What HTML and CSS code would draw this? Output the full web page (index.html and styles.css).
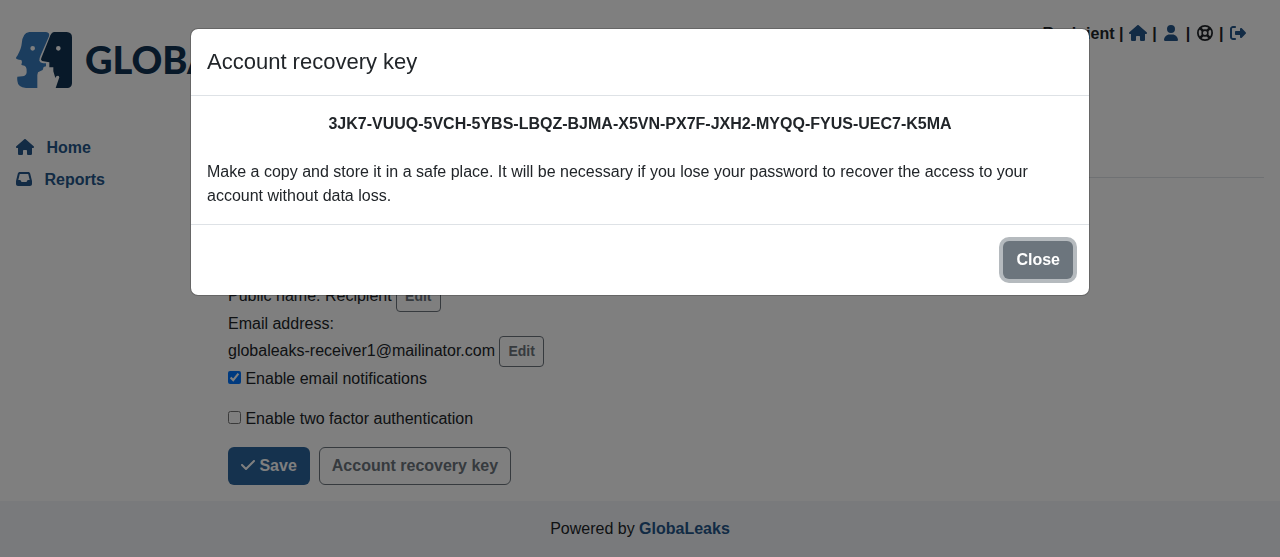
FILE: index.html
```html
<!DOCTYPE html>
<html lang="en">
<head>
<meta charset="utf-8">
<meta name="viewport" content="width=device-width, initial-scale=1">
<title>GlobaLeaks</title>
<link rel="stylesheet" href="styles.css">
</head>
<body>
<svg class="defs" aria-hidden="true">
  <symbol id="house" viewBox="0 0 576 512"><path d="M575.800 255.500c0 18-15 32.100-32 32.100l-32 0 .7 160.200c0 2.700-.2 5.400-.5 8.100l0 16.200c0 22.100-17.900 40-40 40l-16 0c-1.100 0-2.200 0-3.300-.1c-1.400 .1-2.800 .1-4.200 .1L416 512l-24 0c-22.100 0-40-17.900-40-40l0-24 0-64c0-17.700-14.300-32-32-32l-64 0c-17.700 0-32 14.300-32 32l0 64 0 24c0 22.100-17.900 40-40 40l-24 0-31.900 0c-1.500 0-3-.1-4.500-.2c-1.200 .1-2.400 .2-3.600 .2l-16 0c-22.100 0-40-17.900-40-40l0-112c0-.9 0-1.900 .1-2.800l0-69.700-32 0c-18 0-32-14-32-32.100c0-9 3-17 10-24L266.400 8c7-7 15-8 22-8s15 2 21 7L564.800 231.500c8 7 12 15 11 24z"/></symbol>
  <symbol id="user" viewBox="0 0 448 512"><path d="M224 256A128 128 0 1 0 224 0a128 128 0 1 0 0 256zm-45.700 48C79.800 304 0 383.800 0 482.300C0 498.700 13.300 512 29.700 512l388.600 0c16.400 0 29.700-13.300 29.700-29.700C448 383.800 368.200 304 269.700 304l-91.400 0z"/></symbol>
  <symbol id="ring" viewBox="0 0 512 512"><g fill="none" stroke="currentColor"><circle cx="256" cy="256" r="228" stroke-width="56"/><circle cx="256" cy="256" r="92" stroke-width="50"/><path stroke-width="82" d="M92 92l98 98M420 92l-98 98M92 420l98-98M420 420l-98-98"/></g></symbol>
  <symbol id="signout" viewBox="0 0 512 512"><path d="M377.900 105.900L500.700 228.700c7.200 7.200 11.300 17.100 11.300 27.300s-4.100 20.100-11.300 27.300L377.900 406.100c-6.400 6.400-15 9.900-24 9.900c-18.700 0-33.900-15.200-33.900-33.900l0-62.100-128 0c-17.700 0-32-14.300-32-32l0-64c0-17.700 14.300-32 32-32l128 0 0-62.100c0-18.700 15.200-33.900 33.900-33.900c9 0 17.600 3.600 24 9.900zM160 96L96 96c-17.700 0-32 14.300-32 32l0 256c0 17.700 14.300 32 32 32l64 0c17.700 0 32 14.300 32 32s-14.300 32-32 32l-64 0c-53 0-96-43-96-96L0 128C0 75 43 32 96 32l64 0c17.700 0 32 14.300 32 32s-14.300 32-32 32z"/></symbol>
  <symbol id="inbox" viewBox="0 0 512 512"><path d="M121 32C91.600 32 66 52 58.900 80.500L1.900 308.400C.6 313.500 0 318.700 0 323.900L0 416c0 35.300 28.700 64 64 64l384 0c35.300 0 64-28.700 64-64l0-92.100c0-5.200-.6-10.400-1.900-15.500l-57-227.900C446 52 420.400 32 391 32L121 32zm0 64l270 0 48 192-51.200 0c-12.100 0-23.200 6.800-28.600 17.700l-14.300 28.600c-5.400 10.800-16.500 17.700-28.600 17.700l-120.400 0c-12.100 0-23.200-6.800-28.600-17.700l-14.300-28.600c-5.400-10.800-16.500-17.700-28.600-17.700L73 288 121 96z"/></symbol>
  <symbol id="check" viewBox="0 0 448 512"><path d="M438.600 105.400c12.500 12.500 12.500 32.800 0 45.300l-256 256c-12.500 12.500-32.800 12.500-45.300 0l-128-128c-12.500-12.500-12.500-32.800 0-45.300s32.800-12.500 45.300 0L160 338.700 393.400 105.400c12.500-12.500 32.800-12.500 45.300 0z"/></symbol>
</svg>

<div class="page">
  <header class="header">
    <a class="logo" href="#" aria-label="GlobaLeaks">
      <svg class="logo-mark" viewBox="18 18 168 168" aria-hidden="true">
        <path class="face-light" d="M58 18H108Q120 19 117 31L92 88Q87 99 88 104Q90 111 100 112H108V121L101 123L98 132L84 139L82 147V186H48Q23 183 22 164Q21 157 22 152L37 151Q49 150 50 139Q52 118 37 118L34 116L36 108L34 102Q18 101 18 96Q18 93 22 89Q34 68 35 54Q37 20 58 18ZM68 60A7 7 0 1 0 68 74A7 7 0 1 0 68 60Z"/>
        <path class="face-dark" d="M132 18H170Q186 19 186 34V172Q185 185 174 186H137L148 154Q146 147 139 151L136 156L130 136V124H118V109L96 105Q91 101 94 96L118 36Q123 20 132 18ZM145 60A7 7 0 1 0 145 74A7 7 0 1 0 145 60Z"/>
      </svg>
      <span class="logo-text">GLOBALEAKS</span>
    </a>
    <nav class="userbar" aria-label="User">
      Recipient |
      <a href="#" aria-label="Home"><svg class="icon wide"><use href="#house"/></svg></a> |
      <a href="#" aria-label="Preferences"><svg class="icon"><use href="#user"/></svg></a> |
      <a class="plain" href="#" aria-label="Help"><svg class="icon"><use href="#ring"/></svg></a> |
      <a href="#" aria-label="Log out"><svg class="icon"><use href="#signout"/></svg></a>
    </nav>
  </header>

  <div class="columns">
    <nav class="sidebar" aria-label="Main">
      <a href="#"><svg class="icon wide"><use href="#house"/></svg> Home</a>
      <a href="#"><svg class="icon"><use href="#inbox"/></svg> Reports</a>
    </nav>
    <main class="content">
      <form class="prefs">
        <div>Public name: Recipient <button type="button" class="btn small outline">Edit</button></div>
        <div>Email address:</div>
        <div>globaleaks-receiver1@mailinator.com <button type="button" class="btn small outline">Edit</button></div>
        <label class="check"><input type="checkbox" checked> Enable email notifications</label>
        <label class="check spaced"><input type="checkbox"> Enable two factor authentication</label>
        <div class="actions">
          <button type="button" class="btn primary"><svg class="icon narrow"><use href="#check"/></svg> Save</button>
          <button type="button" class="btn outline">Account recovery key</button>
        </div>
      </form>
    </main>
  </div>

  <footer class="footer">Powered by <a href="#">GlobaLeaks</a></footer>
</div>

<div class="backdrop">
  <section class="modal" role="dialog" aria-modal="true" aria-labelledby="modal-title">
    <h1 class="modal-title" id="modal-title">Account recovery key</h1>
    <div class="modal-body">
      <p class="key">3JK7-VUUQ-5VCH-5YBS-LBQZ-BJMA-X5VN-PX7F-JXH2-MYQQ-FYUS-UEC7-K5MA</p>
      <p>Make a copy and store it in a safe place. It will be necessary if you lose your password to recover the access to your account without data loss.</p>
    </div>
    <div class="modal-footer"><button type="button" class="btn secondary">Close</button></div>
  </section>
</div>
</body>
</html>
```

FILE: styles.css
```css
* { box-sizing: border-box; }

body {
  margin: 0;
  background: #fff;
  color: #212529;
  font: 16px/24px "Liberation Sans", Arial, sans-serif;
}

p, h1 { margin: 0; }

a {
  color: #25568a;
  font-weight: 700;
  text-decoration: none;
}

.defs { display: none; }

.icon {
  width: 16px;
  height: 16px;
  fill: currentColor;
  vertical-align: -2px;
}
.icon.wide { width: 18px; }
.icon.narrow { width: 14px; }

.page {
  display: flex;
  flex-direction: column;
  min-height: 100vh;
}

.header {
  display: flex;
  justify-content: space-between;
  align-items: flex-start;
  padding: 22px 32px 0 16px;
}

.logo {
  display: flex;
  align-items: center;
  gap: 13px;
  margin-top: 10px;
}
.logo-mark { width: 56px; height: 56px; }
.face-light { fill: #377abc; fill-rule: evenodd; }
.face-dark { fill: #103253; fill-rule: evenodd; }
.logo-text {
  color: #103253;
  font: 900 38px/52px Lato, sans-serif;
  padding-bottom: 2px;
}

.userbar {
  color: #212529;
  font-weight: 700;
  white-space: nowrap;
}
.userbar a {
  display: inline-block;
  width: 20px;
  text-align: center;
}
.userbar .plain { color: #212529; }

.columns {
  display: flex;
  padding: 44px 16px 16px;
}

.sidebar { width: 196px; flex: none; }
.sidebar a {
  display: block;
  padding: 4px 0;
}
.sidebar .icon { margin-right: 8px; }

.content {
  flex: 1;
  margin-top: 45px;
  border-top: 1px solid #dee2e6;
}

.prefs { padding: 103px 16px 0; }

.check { display: block; }
.check input {
  width: 13px;
  height: 13px;
  margin: 0;
}
.check.spaced { margin: 16px 0; }

.actions { display: flex; gap: 9px; }

.btn {
  padding: 6px 12px;
  border: 1px solid transparent;
  border-radius: 6px;
  font: 700 16px/24px "Liberation Sans", Arial, sans-serif;
  vertical-align: middle;
}
.btn.small {
  padding: 4px 8px;
  border-radius: 4px;
  font-size: 14px;
  line-height: 21px;
}
.btn.outline {
  background: transparent;
  border-color: #6c757d;
  color: #6c757d;
}
.btn.primary { background: #2a649c; color: #fff; }
.btn.secondary {
  background: #6c757d;
  color: #fff;
  box-shadow: 0 0 0 4px #b5babe;
}

.footer {
  flex: 1;
  padding: 16px;
  background: #f3f5f8;
  text-align: center;
}

.backdrop {
  position: fixed;
  inset: 0;
  padding: 28px 16px;
  background: rgba(0, 0, 0, 0.5);
}

.modal {
  max-width: 900px;
  margin: 0 auto;
  background: #fff;
  background-clip: padding-box;
  border: 1px solid rgba(0, 0, 0, 0.2);
  border-radius: 8px;
}
.modal-title {
  padding: 16px;
  border-bottom: 1px solid #dee2e6;
  font-size: 22px;
  font-weight: 400;
  line-height: 34px;
}
.modal-body {
  display: grid;
  gap: 24px;
  padding: 16px;
}
.key { font-weight: 700; text-align: center; }
.modal-footer {
  display: flex;
  justify-content: flex-end;
  padding: 16px;
  border-top: 1px solid #dee2e6;
}
```
